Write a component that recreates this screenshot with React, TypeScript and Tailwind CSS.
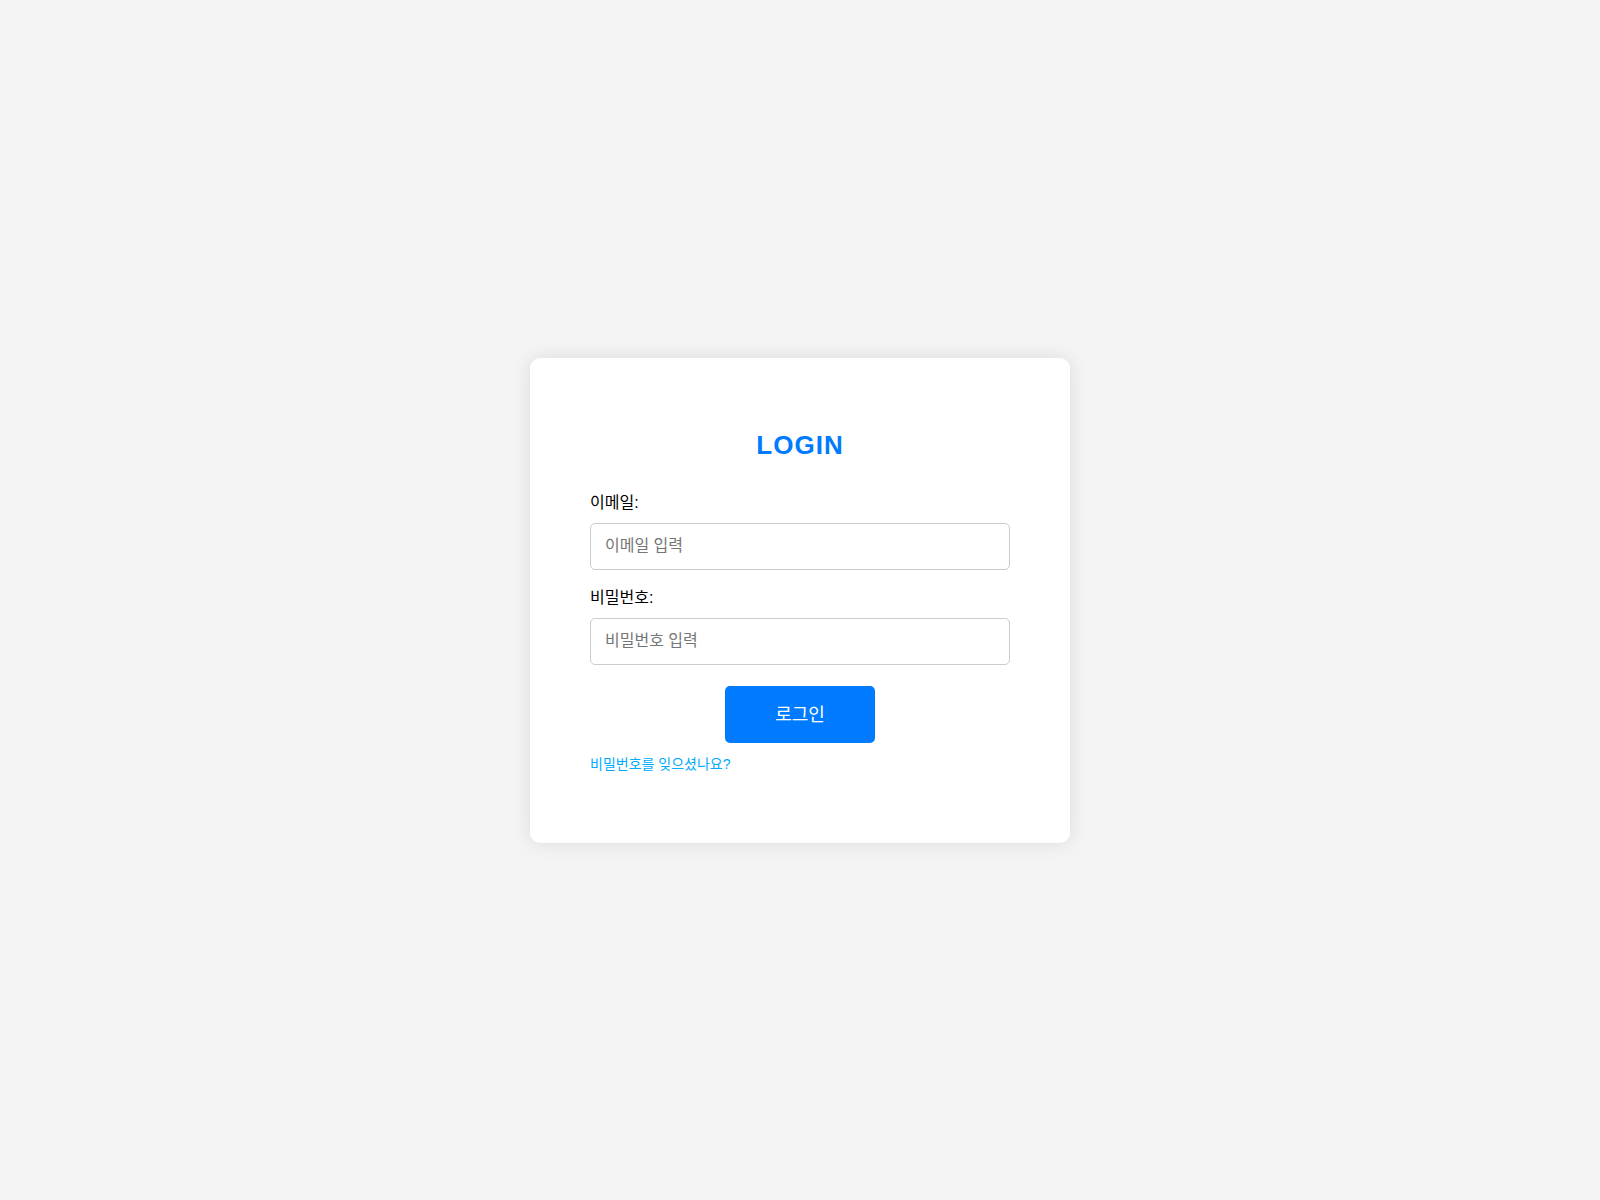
import { useState } from 'react';

const font = "font-['Liberation_Sans','Noto_Sans_CJK_KR',sans-serif]";

export default function App() {
  const [email, setEmail] = useState('');
  const [password, setPassword] = useState('');

  return (
    <div className={`min-h-screen bg-[#f4f4f4] flex items-center justify-center ${font}`}>
      {/* Login card */}
      <div className="w-[540px] bg-white rounded-[10px] shadow-[0_0_20px_rgba(0,0,0,0.1)] px-[60px] pt-[71px] pb-[69px]">
        <h2 className="text-center text-[26px] leading-[32px] tracking-[1px] font-bold text-[#007bff] mb-[30px]">LOGIN</h2>
        <form onSubmit={(e) => e.preventDefault()}>
          <label htmlFor="email" className="block text-[16px] leading-[24px] text-black mb-[8px]">
            이메일:
          </label>
          <input
            id="email"
            type="email"
            value={email}
            onChange={(e) => setEmail(e.target.value)}
            placeholder="이메일 입력"
            className="block w-full h-[47px] px-[14px] text-[16px] border border-[#ccc] rounded-[5px] mb-[16px] outline-none placeholder:text-[#757575]"
          />
          <label htmlFor="password" className="block text-[16px] leading-[24px] text-black mb-[8px]">
            비밀번호:
          </label>
          <input
            id="password"
            type="password"
            value={password}
            onChange={(e) => setPassword(e.target.value)}
            placeholder="비밀번호 입력"
            className="block w-full h-[47px] px-[14px] text-[16px] border border-[#ccc] rounded-[5px] outline-none placeholder:text-[#757575]"
          />
          <div className="flex justify-center mt-[21px]">
            <button
              type="submit"
              className="w-[150px] h-[57px] pt-[3px] bg-[#007bff] text-white text-[18px] rounded-[5px] cursor-pointer"
            >
              로그인
            </button>
          </div>
        </form>
        <a href="#" className="block mt-[11px] text-[14px] leading-[20px] text-[#00aaff]">
          비밀번호를 잊으셨나요?
        </a>
      </div>
    </div>
  );
}
